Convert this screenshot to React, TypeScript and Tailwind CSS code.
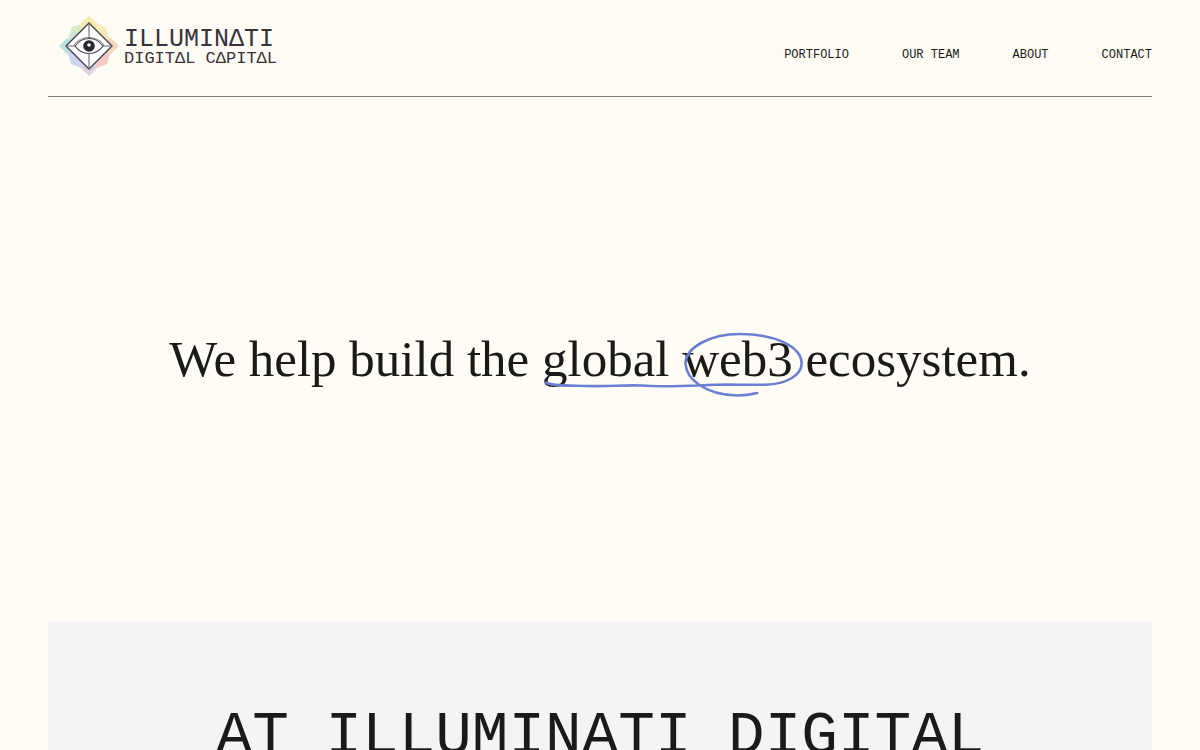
const NAV_LINKS = [
  { label: 'PORTFOLIO', href: '#portfolio' },
  { label: 'OUR TEAM', href: '#team' },
  { label: 'ABOUT', href: '#about' },
  { label: 'CONTACT', href: '#contact' },
]

function LogoMark() {
  return (
    <svg viewBox="0 0 62 62" className="size-[62px] shrink-0" fill="none" aria-hidden="true">
      {/* pastel facets behind the diamond */}
      <path d="M14 12 31 7 31 31Z" fill="#dcebc6" />
      <path d="M48 12 31 7 31 31Z" fill="#f8f2b4" />
      <path d="M31 1 40 9 31 31 22 9Z" fill="#f3ecae" />
      <path d="M14 12 8 31 31 31Z" fill="#cfe9d4" />
      <path d="M48 12 54 31 31 31Z" fill="#f9e8bb" />
      <path d="M13 49 8 31 31 31 31 56Z" fill="#cbd6ea" />
      <path d="M49 49 54 31 31 31 31 56Z" fill="#f7c9c5" />
      <path d="M1 31 9 23 31 31 9 39Z" fill="#b9e3df" />
      <path d="M61 31 53 23 31 31 53 39Z" fill="#f9d6bb" />
      <path d="M31 61 23 53 31 31 39 53Z" fill="#ddd0e2" />
      <path d="M31 8 54 31 31 54 8 31Z" fill="#fff" stroke="#46424f" strokeWidth="1.4" />
      <path d="M31 8V23M31 39V54M8 31H17M45 31H54" stroke="#6b6772" strokeWidth="1.1" />
      <path d="M17 31C24 21 38 21 45 31C38 41 24 41 17 31Z" fill="#fff" stroke="#46424f" strokeWidth="1.2" />
      <path d="M16 30C23 20 39 20 46 30" stroke="#6b6772" strokeWidth="0.8" />
      <circle cx="31" cy="31" r="5.800" fill="#2b2833" />
      <circle cx="31" cy="30" r="1.800" fill="#fff" />
    </svg>
  )
}

function Logo() {
  return (
    <a href="/" className="flex items-center gap-1 font-['Liberation_Mono',monospace] text-[#35323a]">
      <LogoMark />
      <span className="flex flex-col pt-1">
        <span className="text-[25px] leading-[22px]">ILLUMINΔTI</span>
        <span className="text-[17px] leading-4">DIGITΔL CΔPITΔL</span>
      </span>
    </a>
  )
}

function Header() {
  return (
    <header className="mx-12 flex items-center justify-between border-b border-[#827f7a] pt-[15px] pb-[19px] pl-[10px]">
      <Logo />
      <nav className="mt-[18px] flex gap-[53px] font-['Liberation_Mono',monospace] text-xs text-[#1a1a18]">
        {NAV_LINKS.map(link => (
          <a key={link.href} href={link.href}>{link.label}</a>
        ))}
      </nav>
    </header>
  )
}

// Pen stroke that underlines the words, then loops around the last one
function Scribble() {
  return (
    <svg
      viewBox="0 0 260 68"
      className="pointer-events-none absolute top-[5px] left-0 h-[68px] w-[calc(100%+12px)]"
      preserveAspectRatio="none"
      fill="none"
      aria-hidden="true"
    >
      <path
        d="M4 52.500C8 56 27 55.500 44 56C68 56.500 78 55 98 55.500C126 57.500 148 55.500 172 54.800C190 54 206 55.500 224 54.500C241 53.500 257 46 257 33C256 16 230 4 196 4C165 4 142 18 142 34C143 48 160 65 193 65.500C203 65.500 209 64 213 63"
        stroke="#6c80d3"
        strokeWidth="2.600"
        strokeLinecap="round"
      />
    </svg>
  )
}

function Hero() {
  return (
    <section className="flex items-center justify-center px-12 py-[228px]">
      <h1 className="text-center font-['Liberation_Serif',serif] text-[51px] leading-[68px] text-[#1a1a18]">
        We help build the{' '}
        <span className="relative inline-block whitespace-nowrap">
          global web3
          <Scribble />
        </span>{' '}
        ecosystem.
      </h1>
    </section>
  )
}

export default function App() {
  return (
    <div className="h-screen overflow-hidden bg-[#fffcf5]">
      <Header />
      <Hero />
      <section className="mx-12 bg-[#f4f4f4] px-12 pt-20 pb-24">
        <h2 className="text-center font-['Liberation_Mono',monospace] text-[61px] leading-[72px] text-[#1a1a1a]">
          AT ILLUMINATI DIGITAL
        </h2>
      </section>
    </div>
  )
}
